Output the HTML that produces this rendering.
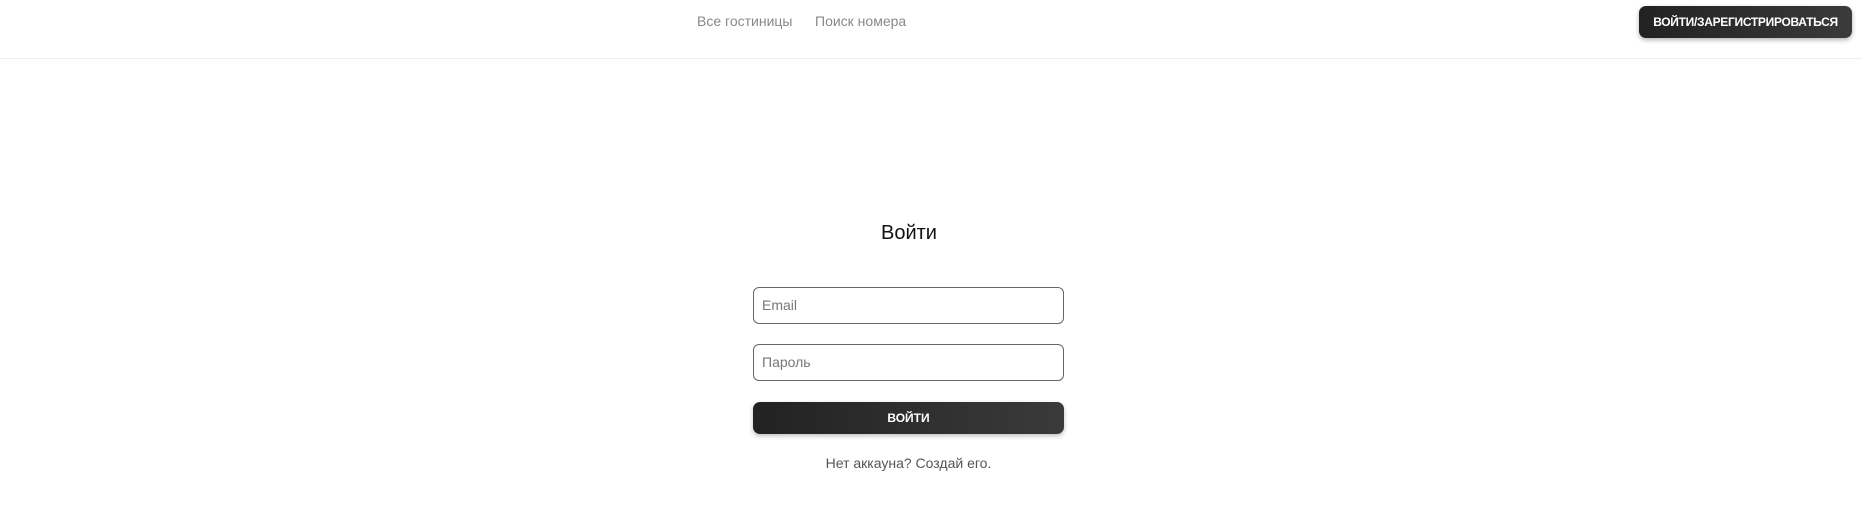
<!DOCTYPE html>
<html><head><meta charset="utf-8"><style>
*{box-sizing:border-box;margin:0;padding:0}
body{width:1862px;height:520px;background:#fff;font-family:"Liberation Sans",sans-serif;position:relative;overflow:hidden}
.hdr{position:absolute;left:0;top:0;width:1862px;height:59px;border-bottom:1px solid #eee}
.nav{position:absolute;top:13px;font-size:14px;color:#888}
.top-btn{position:absolute;left:1639px;top:6px;width:213px;height:32px;border-radius:7px;background:linear-gradient(90deg,#222,#3a3a3a);color:#fff;font-weight:bold;font-size:12px;line-height:32px;text-align:center;box-shadow:0 2px 5px rgba(0,0,0,.3);letter-spacing:-0.3px}
h1{position:absolute;left:0;width:1818px;text-align:center;top:222px;font-weight:normal;font-size:20px;color:#111}
.inp{position:absolute;left:753px;width:311px;height:37px;border:1px solid #666;border-radius:6px;font-size:14px;color:#777;padding-left:8px;line-height:35px}
.btn{position:absolute;left:753px;top:402px;width:311px;height:32px;border-radius:7px;background:linear-gradient(90deg,#222,#3a3a3a);color:#fff;font-weight:bold;font-size:12px;line-height:32px;text-align:center;box-shadow:0 2px 5px rgba(0,0,0,.25)}
.lnk{position:absolute;left:753px;width:311px;top:455px;text-align:center;font-size:14px;color:#555}
</style></head><body>
<div class="hdr"></div>
<div class="nav" style="left:697px">Все гостиницы</div>
<div class="nav" style="left:815px">Поиск номера</div>
<div class="top-btn">ВОЙТИ/ЗАРЕГИСТРИРОВАТЬСЯ</div>
<h1>Войти</h1>
<div class="inp" style="top:287px">Email</div>
<div class="inp" style="top:344px">Пароль</div>
<div class="btn">ВОЙТИ</div>
<div class="lnk">Нет аккауна? Создай его.</div>
</body></html>
